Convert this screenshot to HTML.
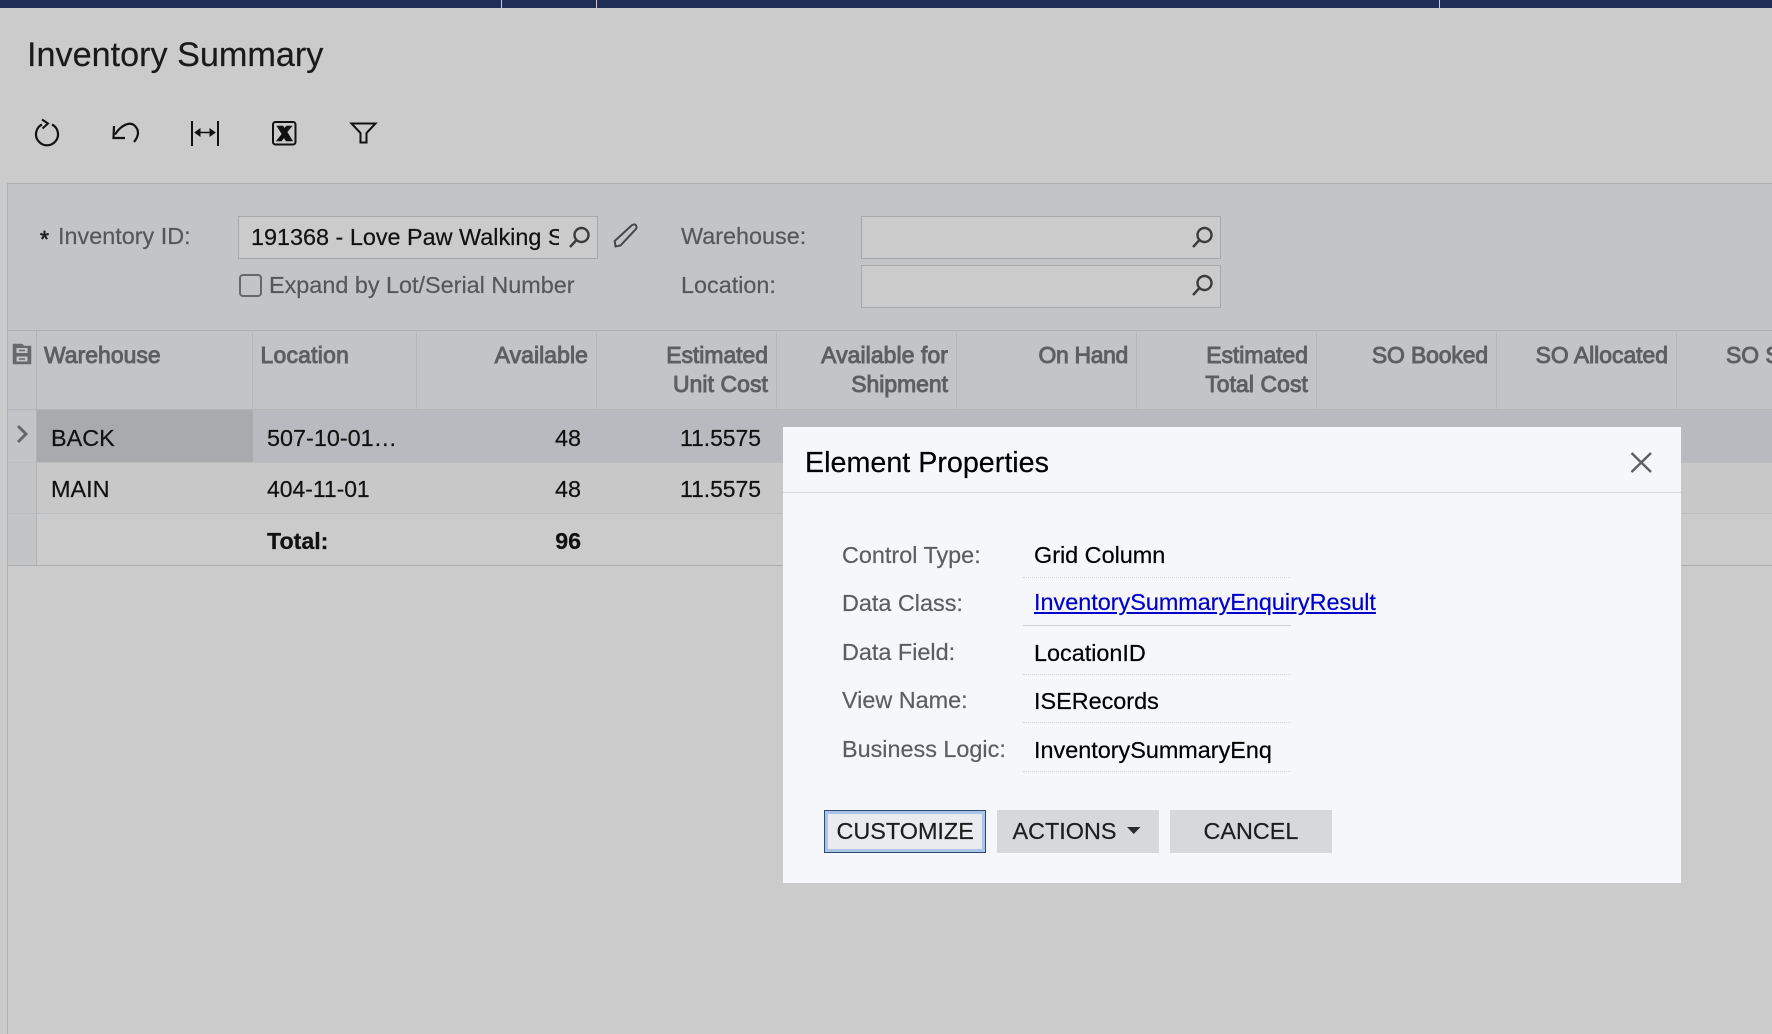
<!DOCTYPE html>
<html><head><meta charset="utf-8"><title>Inventory Summary</title>
<style>
html,body{margin:0;padding:0;width:1772px;height:1034px;overflow:hidden;background:#cbcbcb}
body{position:relative;font-family:"Liberation Sans",Arial,sans-serif;color:#000}
.b{position:absolute}
.t{position:absolute;white-space:pre;line-height:40px;font-size:23.4px;-webkit-text-stroke:.2px currentColor}
.r{text-align:right;width:300px}
.h{color:#5d5f62;-webkit-text-stroke:.95px #5d5f62;font-size:22.9px}
.l{color:#55575a}
svg{position:absolute;overflow:visible}
.d{position:absolute;left:241px;width:268px;height:0;border-top:1px dotted #d4d6da}
</style></head><body>
<!-- top bar -->
<div class="b" style="left:0;top:0;width:1772px;height:8px;background:#1f2f55"></div>
<div class="b" style="left:501px;top:0;width:1px;height:8px;background:#cbcbcb"></div>
<div class="b" style="left:596px;top:0;width:1px;height:8px;background:#cbcbcb"></div>
<div class="b" style="left:1439px;top:0;width:1px;height:8px;background:#cbcbcb"></div>

<div class="t" style="left:27px;top:35px;font-size:34.2px;color:#1a1a1a">Inventory Summary</div>

<!-- toolbar icons -->
<svg style="left:0;top:0" width="400" height="180" fill="none" stroke="#111" stroke-width="2.2">
<path d="M42 124.5A11 11 0 1 0 52 124.5"/><path d="M42 119.5L48 123.5L42.5 128.5" stroke-width="2"/>
<path d="M115 134.500C121 125 130 121 135 126C140 131 138 137 134 142"/><path d="M114 126L113.500 138L125 138" stroke-width="2.200" fill="none"/>
<path d="M192 121V146M218 121V146" stroke-width="2"/><path d="M196 132.500H214" stroke-width="1.600"/><path d="M195 132.500L200 129V136ZM215 132.500L210 129V136Z" fill="#111" stroke-width="1"/>
<rect x="273" y="122" width="22.500" height="22.500" rx="2.500" stroke-width="2"/>
<path d="M277 126H283L284.500 128.500L286.500 126H292L287 132L292.500 141H286L284 137.500L281.500 141H276.500L282 134Z" fill="#111" stroke-width=".6"/>
<path d="M351.500 123.500H375.500L366.500 133V142.500H360.500V133Z" stroke-width="2"/>
</svg>

<!-- form panel -->
<div class="b" style="left:7px;top:183px;width:1765px;height:851px;border-left:1px solid #b0b1b3;box-sizing:border-box"></div>
<div class="b" style="left:8px;top:183px;width:1764px;height:147px;background:#c3c4c6;border-top:1px solid #afb0b2;box-sizing:border-box"></div>

<div class="t" style="left:40px;top:219px;color:#222;font-size:23px;-webkit-text-stroke:.7px #222">*</div>
<div class="t l" style="left:58px;top:216px">Inventory ID:</div>
<div class="b" style="left:238px;top:216px;width:360px;height:43px;background:#cbcbcb;border:1px solid #a7a8aa;box-sizing:border-box"></div>
<div class="t" style="left:251px;top:217px;width:308px;overflow:hidden;color:#111">191368 - Love Paw Walking Shoes</div>
<div class="b" style="left:239px;top:274px;width:23px;height:23px;border:2px solid #66686b;border-radius:4px;box-sizing:border-box"></div>
<div class="t l" style="left:269px;top:265px">Expand by Lot/Serial Number</div>
<div class="t l" style="left:681px;top:216px">Warehouse:</div>
<div class="t l" style="left:681px;top:265px">Location:</div>
<div class="b" style="left:861px;top:216px;width:360px;height:43px;background:#cbcbcb;border:1px solid #a7a8aa;box-sizing:border-box"></div>
<div class="b" style="left:861px;top:265px;width:360px;height:43px;background:#cbcbcb;border:1px solid #a7a8aa;box-sizing:border-box"></div>
<svg style="left:0;top:0" width="1300" height="320" fill="none" stroke="#3a3b3d" stroke-width="2.400">
<circle cx="581.500" cy="235" r="7"/><path d="M576.500 240L570 247"/>
<circle cx="1204.500" cy="235" r="7"/><path d="M1199.500 240L1193 247"/>
<circle cx="1204.500" cy="283" r="7"/><path d="M1199.500 288L1193 295"/>
<path d="M615.500 246.500L614.700 241L631 226C633 224 635 224 636 225.500C637 227 636.500 228.500 635.500 229.500L620.500 245.500Z" stroke="#44464a" stroke-width="2"/>
</svg>

<!-- grid header -->
<div class="b" style="left:8px;top:330px;width:1764px;height:80px;background:#c3c4c6;border-top:1px solid #aeafb1;box-sizing:border-box"></div>
<div class="b" style="left:8px;top:409px;width:1764px;height:1px;background:#b3b4b7"></div>
<!-- rows -->
<div class="b" style="left:8px;top:410px;width:29px;height:155px;background:#c3c4c6"></div>
<div class="b" style="left:37px;top:410px;width:1735px;height:52px;background:#b9babf"></div>
<div class="b" style="left:37px;top:410px;width:216px;height:52px;background:#a9aaae"></div>
<div class="b" style="left:37px;top:462px;width:1735px;height:51px;background:#c8c8c8"></div>
<div class="b" style="left:37px;top:513px;width:1735px;height:52px;background:#cbcbcb"></div>
<div class="b" style="left:8px;top:513px;width:1764px;height:1px;background:#bbbcbd"></div>
<div class="b" style="left:8px;top:462px;width:1764px;height:1px;background:#bcbdbf"></div>
<div class="b" style="left:8px;top:565px;width:1764px;height:1px;background:#adaeb0"></div>
<div class="b" style="left:36px;top:330px;width:1px;height:235px;background:#b2b3b5"></div>
<div class="b" style="left:252px;top:330px;width:1px;height:80px;background:#b6b7b9"></div>
<div class="b" style="left:416px;top:330px;width:1px;height:80px;background:#b6b7b9"></div>
<div class="b" style="left:596px;top:330px;width:1px;height:80px;background:#b6b7b9"></div>
<div class="b" style="left:776px;top:330px;width:1px;height:80px;background:#b6b7b9"></div>
<div class="b" style="left:956px;top:330px;width:1px;height:80px;background:#b6b7b9"></div>
<div class="b" style="left:1136px;top:330px;width:1px;height:80px;background:#b6b7b9"></div>
<div class="b" style="left:1316px;top:330px;width:1px;height:80px;background:#b6b7b9"></div>
<div class="b" style="left:1496px;top:330px;width:1px;height:80px;background:#b6b7b9"></div>
<div class="b" style="left:1676px;top:330px;width:1px;height:80px;background:#b6b7b9"></div>

<svg style="left:0;top:0" width="60" height="460" fill="none" stroke="#66686b" stroke-width="2">
<path d="M13.500 363.500V344.500H22L23.500 346.500H30.500V363.500Z" fill="#66686b" stroke-width="1.500"/>
<rect x="16.500" y="348" width="11" height="5" fill="#c3c4c6" stroke="none"/>
<rect x="16.500" y="356.500" width="11" height="5" fill="#c3c4c6" stroke="none"/>
<path d="M19 350.500H25M19 359H25" stroke-width="1.500"/>
<path d="M18 426L26 434L18 442" stroke-width="3"/>
</svg>

<div class="t h" style="left:44px;top:335px;letter-spacing:.05px">Warehouse</div>
<div class="t h" style="left:260.500px;top:335px;letter-spacing:.25px">Location</div>
<div class="t h r" style="left:288px;top:335px;letter-spacing:.1px">Available</div>
<div class="t h r" style="left:468px;top:335px">Estimated</div>
<div class="t h r" style="left:468px;top:364px;letter-spacing:.1px">Unit Cost</div>
<div class="t h r" style="left:648px;top:335px;letter-spacing:.1px">Available for</div>
<div class="t h r" style="left:648px;top:364px">Shipment</div>
<div class="t h r" style="left:828px;top:335px;letter-spacing:-.3px">On Hand</div>
<div class="t h r" style="left:1008px;top:335px">Estimated</div>
<div class="t h r" style="left:1008px;top:364px;letter-spacing:.1px">Total Cost</div>
<div class="t h r" style="left:1188px;top:335px;letter-spacing:-.1px">SO Booked</div>
<div class="t h r" style="left:1368px;top:335px">SO Allocated</div>
<div class="t h" style="left:1726px;top:335px">SO Shipped</div>

<div class="t" style="left:51px;top:418px;color:#111">BACK</div>
<div class="t" style="left:267px;top:418px;color:#111">507-10-01…</div>
<div class="t r" style="left:281px;top:418px;color:#111">48</div>
<div class="t r" style="left:461px;top:418px;color:#111;font-size:22.9px">11.5575</div>
<div class="t" style="left:51px;top:469px;color:#111">MAIN</div>
<div class="t" style="left:267px;top:469px;color:#111;font-size:22.9px">404-11-01</div>
<div class="t r" style="left:281px;top:469px;color:#111">48</div>
<div class="t r" style="left:461px;top:469px;color:#111;font-size:22.9px">11.5575</div>
<div class="t" style="left:267px;top:521px;font-weight:bold;color:#111;font-size:23.2px">Total:</div>
<div class="t r" style="left:281px;top:521px;font-weight:bold;color:#111;font-size:23.2px">96</div>

<!-- dialog -->
<div class="b" style="left:783px;top:427px;width:898px;height:456px;background:#f5f7fa">
<div class="b" style="left:0;top:65px;width:898px;height:1px;background:#d3d5d9"></div>
<div class="t" style="left:22px;top:16px;font-size:28.700px">Element Properties</div>
<svg style="left:0;top:0" width="898" height="60" fill="none" stroke="#5d5f63" stroke-width="2.400"><path d="M848.500 26L868 45M868 26L848.500 45"/></svg>

<div class="t" style="left:59px;top:108px;color:#5c5e62">Control Type:</div>
<div class="t" style="left:59px;top:156px;color:#5c5e62">Data Class:</div>
<div class="t" style="left:59px;top:205px;color:#5c5e62">Data Field:</div>
<div class="t" style="left:59px;top:253px;color:#5c5e62">View Name:</div>
<div class="t" style="left:59px;top:302px;color:#5c5e62">Business Logic:</div>

<div class="t" style="left:251px;top:108px">Grid Column</div>
<div class="t" style="left:251px;top:155px;color:#0000cc;text-decoration:underline">InventorySummaryEnquiryResult</div>
<div class="t" style="left:251px;top:206px">LocationID</div>
<div class="t" style="left:251px;top:254px">ISERecords</div>
<div class="t" style="left:251px;top:303px">InventorySummaryEnq</div>

<div class="d" style="top:150px;left:240px"></div>
<div class="b" style="left:240px;top:198px;width:268px;height:1px;background:#cfd1d5"></div>
<div class="d" style="top:247px;left:240px"></div>
<div class="d" style="top:295px;left:240px"></div>
<div class="d" style="top:344px;left:240px"></div>

<div class="b" style="left:41px;top:383px;width:162px;height:43px;box-sizing:border-box;background:#e9ebef;border:1px solid #2c4a75;box-shadow:inset 0 0 0 3px #a9c6e8"></div>
<div class="b" style="left:214px;top:383px;width:162px;height:43px;background:#d7d8da"></div>
<div class="b" style="left:387px;top:383px;width:162px;height:43px;background:#d7d8da"></div>
<div class="t" style="left:53.500px;top:384px;color:#1d1d1d">CUSTOMIZE</div>
<div class="t" style="left:229.500px;top:384px;color:#1d1d1d">ACTIONS</div>
<div class="t" style="left:420.500px;top:384px;color:#1d1d1d">CANCEL</div>
<svg style="left:0;top:0" width="898" height="456"><path d="M344 400H357.500L350.700 407Z" fill="#2a2a2a"/></svg>
</div>
</body></html>
